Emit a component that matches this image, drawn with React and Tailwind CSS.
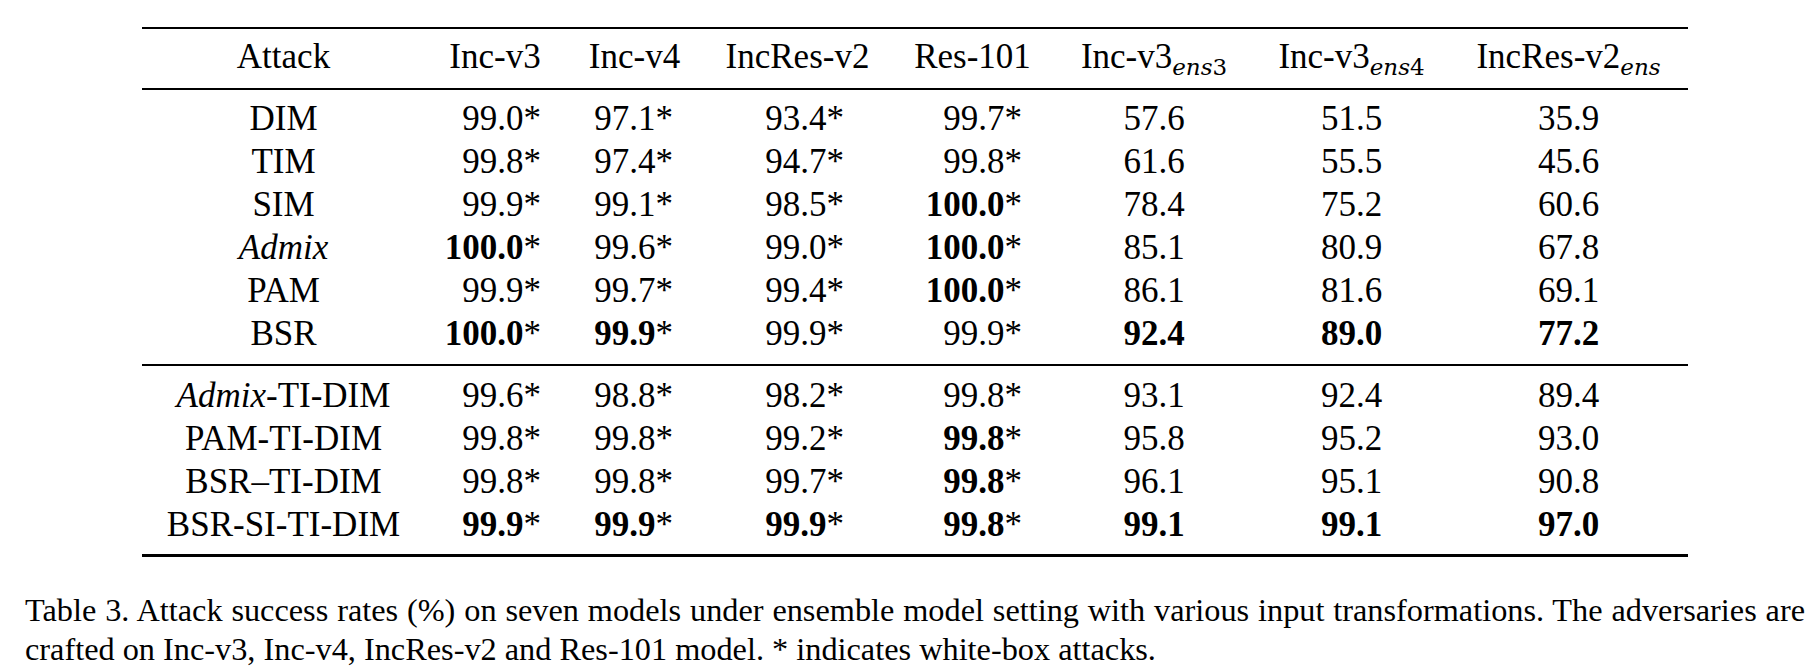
import React from "react";

const serif = "[font-family:Liberation_Serif,Times_New_Roman,serif]";
const cols = "grid grid-cols-[283px_140px_139px_187px_163px_200px_195px_239px]";

// number cells: right-aligned columns carry the asterisk, the ens columns are centered
const numAlign = [
  "text-right pr-[24px]",
  "text-right pr-[31px]",
  "text-right pr-[47px]",
  "text-right pr-[32px]",
  "text-center",
  "text-center",
  "text-center",
];

const n = (v, b = false) => ({ v, b });

const groupA = [
  { label: "DIM", vals: [n("99.0"), n("97.1"), n("93.4"), n("99.7"), n("57.6"), n("51.5"), n("35.9")] },
  { label: "TIM", vals: [n("99.8"), n("97.4"), n("94.7"), n("99.8"), n("61.6"), n("55.5"), n("45.6")] },
  { label: "SIM", vals: [n("99.9"), n("99.1"), n("98.5"), n("100.0", true), n("78.4"), n("75.2"), n("60.6")] },
  { label: <i>Admix</i>, vals: [n("100.0", true), n("99.6"), n("99.0"), n("100.0", true), n("85.1"), n("80.9"), n("67.8")] },
  { label: "PAM", vals: [n("99.9"), n("99.7"), n("99.4"), n("100.0", true), n("86.1"), n("81.6"), n("69.1")] },
  { label: "BSR", vals: [n("100.0", true), n("99.9", true), n("99.9"), n("99.9"), n("92.4", true), n("89.0", true), n("77.2", true)] },
];

const groupB = [
  { label: <><i>Admix</i>-TI-DIM</>, vals: [n("99.6"), n("98.8"), n("98.2"), n("99.8"), n("93.1"), n("92.4"), n("89.4")] },
  { label: "PAM-TI-DIM", vals: [n("99.8"), n("99.8"), n("99.2"), n("99.8", true), n("95.8"), n("95.2"), n("93.0")] },
  { label: "BSR\u2013TI-DIM", vals: [n("99.8"), n("99.8"), n("99.7"), n("99.8", true), n("96.1"), n("95.1"), n("90.8")] },
  { label: "BSR-SI-TI-DIM", vals: [n("99.9", true), n("99.9", true), n("99.9", true), n("99.8", true), n("99.1", true), n("99.1", true), n("97.0", true)] },
];

function Sub({ letters, digit }) {
  return (
    <span className="[font-family:DejaVu_Serif,serif] text-[23px] align-[-7px]">
      <i>{letters}</i>
      {digit}
    </span>
  );
}

function DataRow({ row }) {
  return (
    <div className={`${cols} h-[43px] leading-[43px]`}>
      <div className="text-center whitespace-nowrap">{row.label}</div>
      {row.vals.map((c, i) => (
        <div key={i} className={`${numAlign[i]} whitespace-nowrap`}>
          <span className={c.b ? "font-bold" : ""}>{c.v}</span>
          {i < 4 && "*"}
        </div>
      ))}
    </div>
  );
}

export default function App() {
  return (
    <div className={`w-[1818px] h-[668px] bg-white text-black ${serif} overflow-hidden`}>
      <div className="ml-[142px] w-[1546px] pt-[27px] text-[35px]">
        <div className="h-[2px] bg-black" />

        {/* header */}
        <div className={`${cols} h-[43px] leading-[43px] mt-[6px] mb-[10px] whitespace-nowrap`}>
          <div className="text-center">Attack</div>
          <div className="text-center">Inc-v3</div>
          <div className="text-center">Inc-v4</div>
          <div className="text-center">IncRes-v2</div>
          <div className="text-center">Res-101</div>
          <div className="text-center">
            Inc-v3<Sub letters="ens" digit="3" />
          </div>
          <div className="text-center">
            Inc-v3<Sub letters="ens" digit="4" />
          </div>
          <div className="text-center">
            IncRes-v2<Sub letters="ens" />
          </div>
        </div>
        <div className="h-[2px] bg-black" />

        <div className="pt-[7px] pb-[9px]">
          {groupA.map((r, i) => (
            <DataRow key={i} row={r} />
          ))}
        </div>
        <div className="h-[2px] bg-black" />

        <div className="pt-[8px] pb-[8px]">
          {groupB.map((r, i) => (
            <DataRow key={i} row={r} />
          ))}
        </div>
        <div className="h-[3px] bg-black" />
      </div>

      {/* caption, first line stretched like the LaTeX original */}
      <div className="ml-[25px] w-[1780px] mt-[34px] text-[32.3px] leading-[39px]">
        <p className="text-justify [text-align-last:justify] whitespace-nowrap">
          Table 3. Attack success rates (%) on seven models under ensemble model setting with various input
          transformations. The adversaries are
        </p>
        <p>crafted on Inc-v3, Inc-v4, IncRes-v2 and Res-101 model. * indicates white-box attacks.</p>
      </div>
    </div>
  );
}
